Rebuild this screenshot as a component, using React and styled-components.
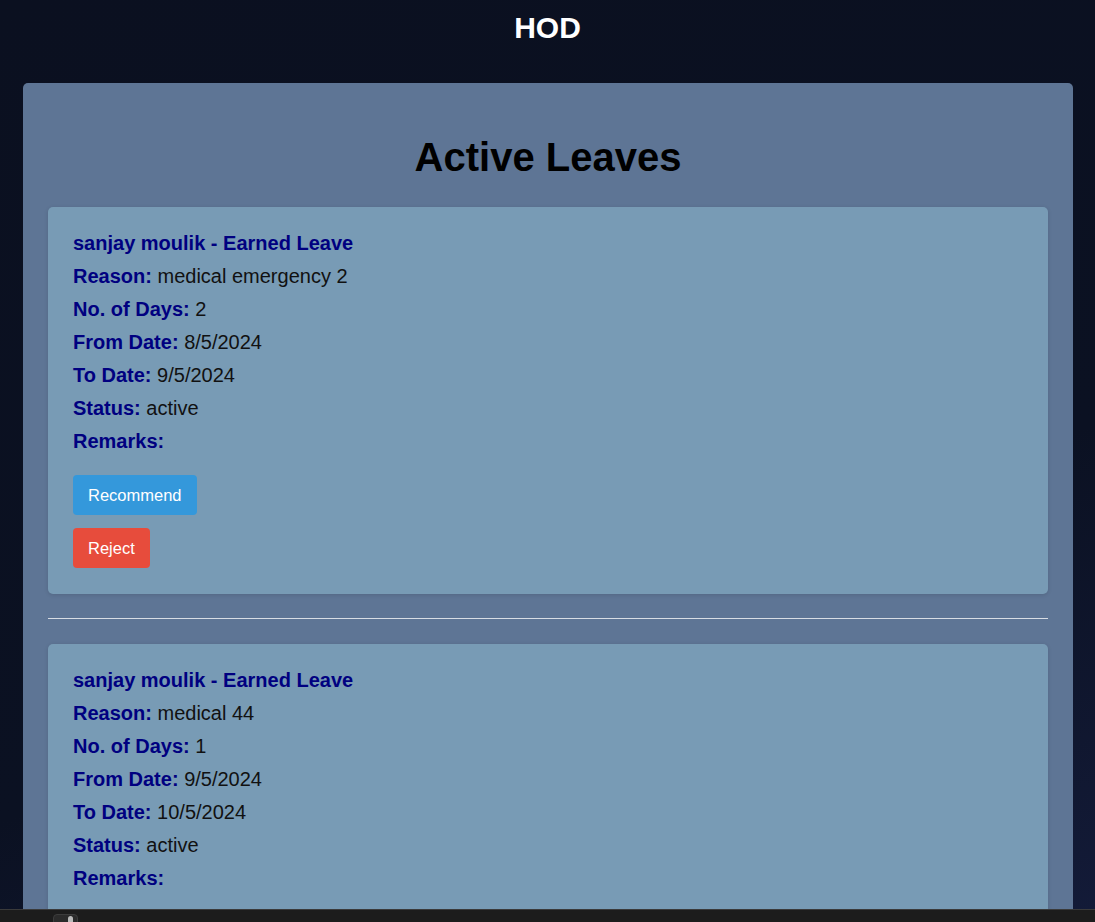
import React from 'react'
import styled, { createGlobalStyle } from 'styled-components'

const GlobalStyle = createGlobalStyle`
  html, body {
    margin: 0;
    padding: 0;
  }
  body {
    font-family: "Liberation Sans", Arial, sans-serif;
    background: linear-gradient(160deg, #0b1020 0%, #0b1122 55%, #161e40 100%);
    min-height: 100vh;
  }
`

const Page = styled.div`
  min-height: 100vh;
  padding-bottom: 40px;
`

const Header = styled.header`
  height: 56px;
  display: flex;
  align-items: center;
  justify-content: center;
  color: #fff;
  font-size: 30px;
  font-weight: bold;
`

const Panel = styled.main`
  margin: 27px 22px 0 23px;
  background: #5e7595;
  border-radius: 5px;
  padding: 25px;
`

const Title = styled.h2`
  margin: 26px 0 27px;
  text-align: center;
  font-size: 40px;
  line-height: 46px;
  color: #000;
`

const Card = styled.div`
  background: #789bb5;
  border-radius: 5px;
  padding: 20px 25px 26px;
  box-shadow: 0 1px 4px rgba(0, 0, 0, 0.12);
`

const Line = styled.div`
  font-size: 20px;
  line-height: 33px;
  color: #111;
`

const Label = styled.strong`
  color: #000080;
`

const Actions = styled.div`
  display: flex;
  flex-direction: column;
  align-items: flex-start;
  gap: 13px;
  margin-top: 17px;
`

const Button = styled.button`
  font-family: "Liberation Sans", Arial, sans-serif;
  font-size: 16.5px;
  height: 40px;
  padding: 0 15px;
  border: none;
  border-radius: 4px;
  color: #fff;
  background: ${p => (p.$variant === 'reject' ? '#e74c3c' : '#3498db')};
  cursor: pointer;
`

const Divider = styled.hr`
  border: none;
  border-top: 1px solid #d8dde4;
  margin: 24px 0 25px;
`

const BottomBar = styled.div`
  position: fixed;
  left: 0;
  right: 0;
  bottom: 0;
  height: 12px;
  background: #1c1c1c;
  border-top: 1px solid #3a3a3a;
`

const Thumb = styled.div`
  position: absolute;
  left: 53px;
  top: 4px;
  width: 23px;
  height: 10px;
  border-radius: 4px 4px 0 0;
  background: #2b2b2b;
  border: 1px solid #3c3c3c;
  &::after {
    content: '';
    position: absolute;
    left: 14px;
    top: 1px;
    width: 5px;
    height: 8px;
    border-radius: 3px;
    background: #bbb;
  }
`

const leaves = [
  { name: 'sanjay moulik', type: 'Earned Leave', reason: 'medical emergency 2', days: 2, from: '8/5/2024', to: '9/5/2024', status: 'active', remarks: '' },
  { name: 'sanjay moulik', type: 'Earned Leave', reason: 'medical 44', days: 1, from: '9/5/2024', to: '10/5/2024', status: 'active', remarks: '' },
]

const LeaveCard = ({ leave }) => (
  <Card>
    <Line><Label>{leave.name} - {leave.type}</Label></Line>
    <Line><Label>Reason:</Label> {leave.reason}</Line>
    <Line><Label>No. of Days:</Label> {leave.days}</Line>
    <Line><Label>From Date:</Label> {leave.from}</Line>
    <Line><Label>To Date:</Label> {leave.to}</Line>
    <Line><Label>Status:</Label> {leave.status}</Line>
    <Line><Label>Remarks:</Label> {leave.remarks}</Line>
    <Actions>
      <Button>Recommend</Button>
      <Button $variant="reject">Reject</Button>
    </Actions>
  </Card>
)

const App = () => (
  <>
    <GlobalStyle />
    <Page>
      <Header>HOD</Header>
      <Panel>
        <Title>Active Leaves</Title>
        {leaves.map((leave, i) => (
          <React.Fragment key={i}>
            {i > 0 && <Divider />}
            <LeaveCard leave={leave} />
          </React.Fragment>
        ))}
      </Panel>
    </Page>
    <BottomBar>
      <Thumb />
    </BottomBar>
  </>
)

export default App
